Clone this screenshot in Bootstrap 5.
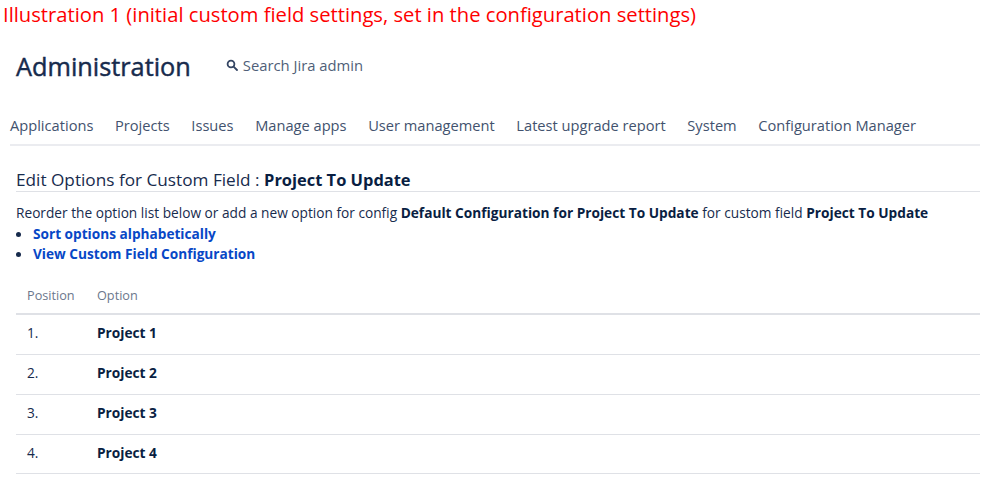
<!DOCTYPE html>
<html lang="en">
<head>
<meta charset="utf-8">
<title>Administration</title>
<link href="https://cdn.jsdelivr.net/npm/bootstrap@5.3.0/dist/css/bootstrap.min.css" rel="stylesheet">
<style>
html,body{height:488px;overflow:hidden}
body{font-family:"Open Sans","Noto Sans","Liberation Sans",sans-serif;background:#fff;color:#172b4d;font-size:14px}
.shot-note{color:#fe0000;font-size:20.2px;line-height:24px;padding:2px 0 0 3px;height:29px}
.admin-head{height:72px;padding:2px 0 0 16px}
.admin-title{font-size:25.3px;line-height:36px;margin:0;font-weight:400;color:#172b4d;-webkit-text-stroke:.45px #172b4d}
.admin-search{margin-left:35px;font-size:14.8px;color:#505f79;margin-top:-2px}
.admin-search svg{margin-right:5px}
.admin-tabs{margin:0 19px 0 10px;height:45px;border-bottom:2px solid #ebecf0;gap:21.6px;font-size:14.65px;color:#42526e;padding-top:14px;line-height:20px}
.edit-title{margin:21px 19px 0 16px;border-bottom:1px solid #dfe1e6;font-size:17.2px;line-height:24px;height:25px;padding-top:1px;color:#172b4d}
.edit-title b{font-weight:700;font-size:16.45px;color:#091e42}
.edit-intro{margin:11px 0 0 16px;font-size:13.7px;line-height:20px;white-space:nowrap}
.edit-intro b{color:#091e42}
.edit-links{margin:1px 0 0 16px;padding:0;list-style:none;font-size:13.65px;line-height:20px}
.edit-links li{display:flex;align-items:center}
.edit-links li::before{content:"";width:5px;height:5px;border-radius:50%;background:#172b4d;margin:0 12px 0 0}
.edit-links a{color:#0747c6;font-weight:700;text-decoration:none}
.opt-wrap{margin:21px 19px 0 16px}
.opt-table{margin:0;table-layout:fixed;width:100%}
.opt-table th{color:#6b778c;font-size:12.7px;line-height:20px;padding:0 0 8px 11px;border-bottom:2px solid #dfe1e6;font-weight:500}
.opt-table td{height:40px;padding:0 0 2px 11px;vertical-align:middle;border-bottom:1px solid #dfe1e6;color:#172b4d;line-height:20px;font-size:13.7px}
.opt-table tr:last-child td{height:39px}
.opt-table td b{color:#091e42}
.col-pos{width:70px}
</style>
</head>
<body>
<div class="shot-note">Illustration 1 (initial custom field settings, set in the configuration settings)</div>
<div class="admin-head d-flex align-items-center">
  <h1 class="admin-title">Administration</h1>
  <div class="admin-search d-flex align-items-center">
    <svg width="12" height="12" viewBox="0 0 12 12" fill="none" stroke="#344563" stroke-width="1.8"><circle cx="5" cy="5" r="3.4"/><path d="M7.6 7.6 11 11" stroke-linecap="round"/></svg>
    <span>Search Jira admin</span>
  </div>
</div>
<nav class="admin-tabs d-flex">
  <span>Applications</span><span>Projects</span><span>Issues</span><span>Manage apps</span><span>User management</span><span>Latest upgrade report</span><span>System</span><span>Configuration Manager</span>
</nav>
<div class="edit-title">Edit Options for Custom Field : <b>Project To Update</b></div>
<div class="edit-intro">Reorder the option list below or add a new option for config <b>Default Configuration for Project To Update</b> for custom field <b>Project To Update</b></div>
<ul class="edit-links">
  <li><a href="#">Sort options alphabetically</a></li>
  <li><a href="#">View Custom Field Configuration</a></li>
</ul>
<div class="opt-wrap">
<table class="table opt-table">
  <thead><tr><th class="col-pos">Position</th><th>Option</th></tr></thead>
  <tbody>
    <tr><td>1.</td><td><b>Project 1</b></td></tr>
    <tr><td>2.</td><td><b>Project 2</b></td></tr>
    <tr><td>3.</td><td><b>Project 3</b></td></tr>
    <tr><td>4.</td><td><b>Project 4</b></td></tr>
  </tbody>
</table>
</div>
<script src="https://cdn.jsdelivr.net/npm/bootstrap@5.3.0/dist/js/bootstrap.bundle.min.js"></script>
</body>
</html>
